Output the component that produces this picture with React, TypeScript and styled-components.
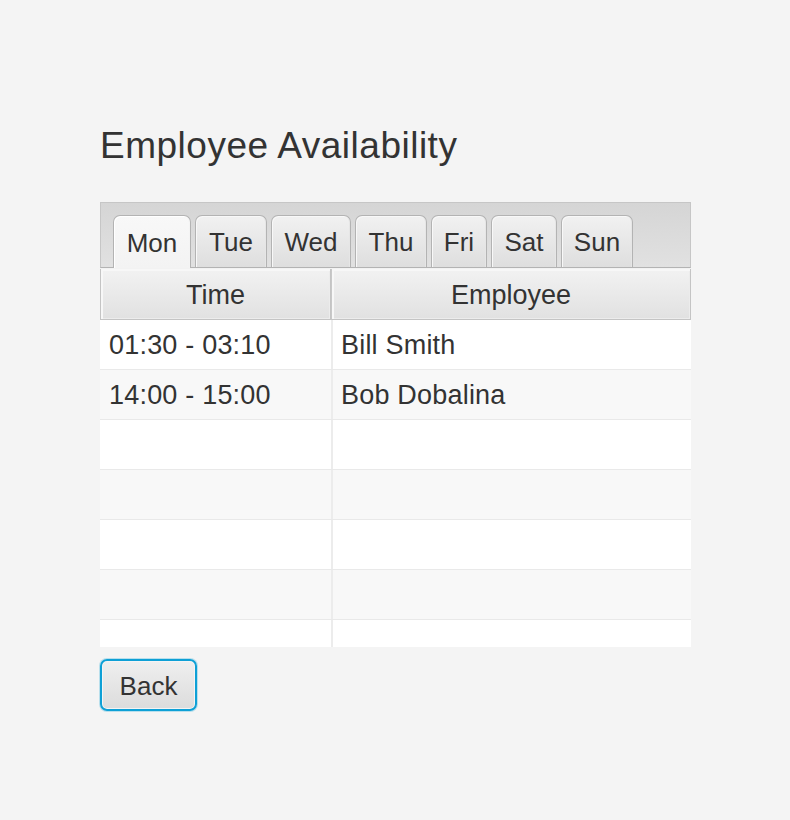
import React from "react";
import styled, { createGlobalStyle } from "styled-components";

const Global = createGlobalStyle`
  html, body { margin: 0; padding: 0; background: #f4f4f4; }
  body { font-family: "Liberation Sans", Arial, sans-serif; color: #333333; }
  * { box-sizing: border-box; }
`;

const Page = styled.div`
  width: 790px;
  height: 820px;
  padding: 121px 0 0 100px;
  background: #f4f4f4;
`;

const Title = styled.h1`
  margin: 0;
  height: 48px;
  line-height: 48px;
  padding-top: 1px;
  font-size: 37px;
  font-weight: normal;
  color: #333333;
  letter-spacing: 0.5px;
`;

const TabPane = styled.div`
  margin-top: 33px;
  width: 591px;
  display: flex;
  flex-direction: column;
`;

const TabHeader = styled.div`
  height: 66px;
  display: flex;
  align-items: flex-end;
  gap: 4px;
  padding-left: 12px;
  background: linear-gradient(#d5d5d5, #e1e1e1);
  border: 1px solid #c6c6c6;
  border-bottom: 1px solid #b3b3b3;
`;

const Tab = styled.div<{ $active?: boolean; $w: number }>`
  flex: none;
  width: ${(p) => p.$w}px;
  height: ${(p) => (p.$active ? "53px" : "52px")};
  margin-bottom: ${(p) => (p.$active ? "-1px" : "0")};
  padding: 2px 0 0;
  display: flex;
  align-items: center;
  justify-content: center;
  font-size: 26px;
  color: #333333;
  border: 1px solid #b3b3b3;
  border-bottom: none;
  border-radius: 7px 7px 0 0;
  background: ${(p) =>
    p.$active
      ? "linear-gradient(#f8f8f8, #f3f3f3)"
      : "linear-gradient(#f1f1f1, #dedede)"};
  box-shadow: inset 1px 1px 0 ${(p) => (p.$active ? "#ffffff" : "#f8f8f8")},
    inset -1px 0 0 ${(p) => (p.$active ? "#f4f4f4" : "#e6e6e6")};
`;

const Table = styled.div`
  display: flex;
  flex-direction: column;
  width: 591px;
`;

const HeadRow = styled.div`
  display: grid;
  grid-template-columns: 231px 360px;
  height: 52px;
  border-top: 1px solid #f2f2f2;
`;

const HeadCell = styled.div`
  display: flex;
  align-items: center;
  justify-content: center;
  padding-top: 2px;
  font-size: 27px;
  color: #333333;
  background: linear-gradient(#f2f2f2, #e1e1e1);
  border-right: 1px solid #c4c4c4;
  border-bottom: 1px solid #c4c4c4;
  border-left: 1px solid #c4c4c4;
  box-shadow: inset 2px 2px 0 #f7f7f7, inset -1px -1px 0 #ececec;
  & + & {
    border-left: 1px solid #c8c8c8;
  }
`;

const Body = styled.div`
  height: 327px;
  overflow: hidden;
  display: flex;
  flex-direction: column;
`;

const Row = styled.div<{ $odd?: boolean }>`
  flex: none;
  display: grid;
  grid-template-columns: 231px 360px;
  height: 50px;
  background: ${(p) => (p.$odd ? "#f8f8f8" : "#ffffff")};
  border-bottom: 1px solid #e9e9e9;
`;

const Cell = styled.div`
  display: flex;
  align-items: center;
  padding: 2px 0 0 9px;
  font-size: 27px;
  letter-spacing: 0.2px;
  color: #333333;
  & + & {
    border-left: 2px solid #ececec;
    padding-left: 8px;
  }
`;

const BackButton = styled.button`
  margin-top: 12px;
  width: 97px;
  height: 52px;
  display: flex;
  align-items: center;
  justify-content: center;
  font-family: "Liberation Sans", Arial, sans-serif;
  font-size: 26px;
  color: #333333;
  border: 2px solid #0ea0d6;
  border-radius: 7px;
  background: linear-gradient(#efefef, #dcdcdc);
  box-shadow: 0 0 0 1px rgba(3, 158, 211, 0.25), inset 0 0 0 1px #f4f4f4;
  padding: 2px 0 0;
  cursor: pointer;
`;

const days: [string, number][] = [
  ["Mon", 78],
  ["Tue", 72],
  ["Wed", 80],
  ["Thu", 72],
  ["Fri", 56],
  ["Sat", 66],
  ["Sun", 72],
];
const data: [string, string][] = [
  ["01:30 - 03:10", "Bill Smith"],
  ["14:00 - 15:00", "Bob Dobalina"],
  ["", ""],
  ["", ""],
  ["", ""],
  ["", ""],
  ["", ""],
];

export default function App() {
  return (
    <Page>
      <Global />
      <Title>Employee Availability</Title>
      <TabPane>
        <TabHeader>
          {days.map(([d, w], i) => (
            <Tab key={d} $w={w} $active={i === 0}>
              {d}
            </Tab>
          ))}
        </TabHeader>
        <Table>
          <HeadRow>
            <HeadCell>Time</HeadCell>
            <HeadCell>Employee</HeadCell>
          </HeadRow>
          <Body>
            {data.map((r, i) => (
              <Row key={i} $odd={i % 2 === 1}>
                <Cell>{r[0]}</Cell>
                <Cell>{r[1]}</Cell>
              </Row>
            ))}
          </Body>
        </Table>
      </TabPane>
      <BackButton>Back</BackButton>
    </Page>
  );
}
